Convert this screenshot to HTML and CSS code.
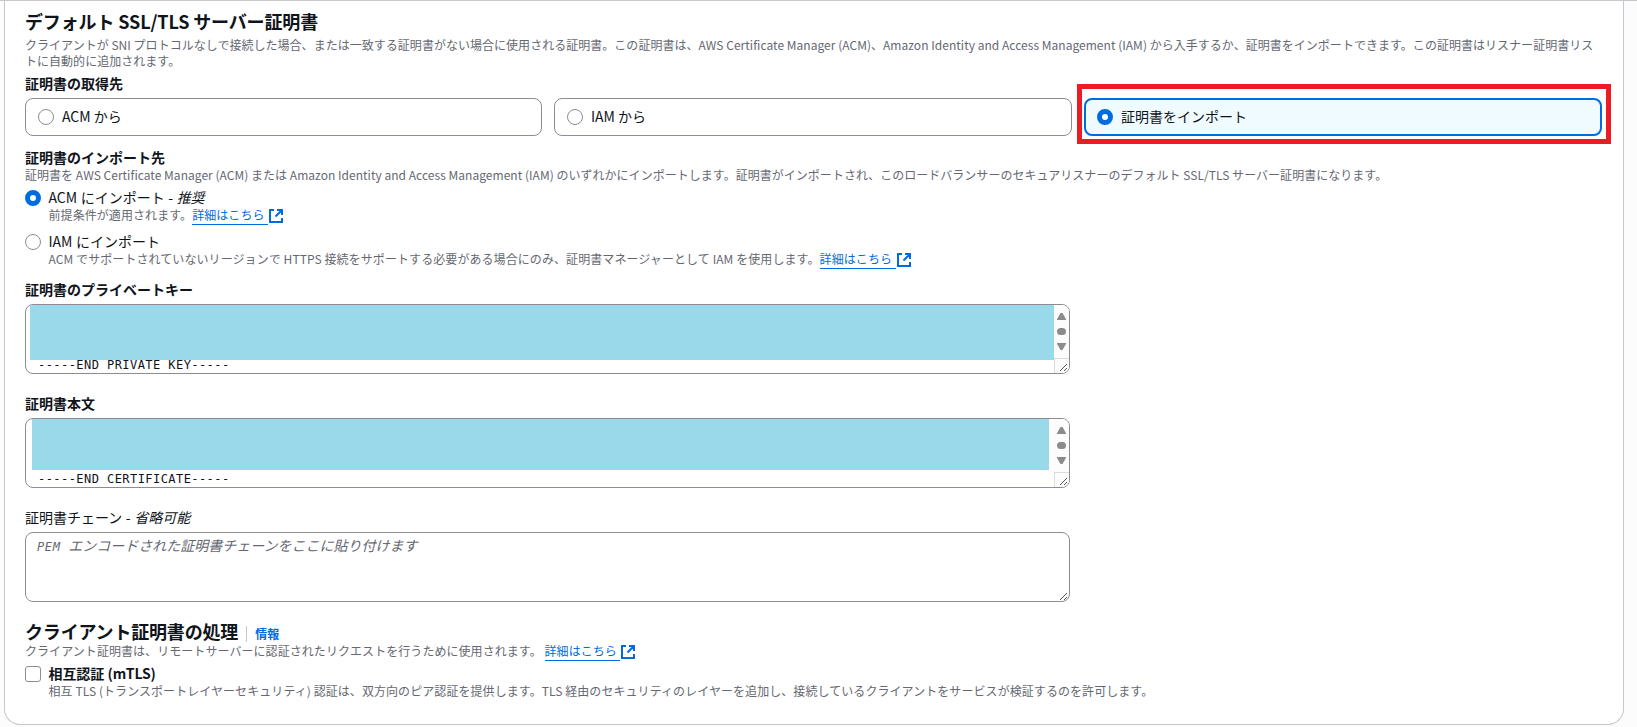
FILE: index.html
```
<!DOCTYPE html>
<html lang="ja">
<head>
  <meta charset="UTF-8">
  <title>デフォルト SSL/TLS サーバー証明書</title>
  <meta name="viewport" content="width=device-width, initial-scale=1">
  <link rel="stylesheet" href="styles.css">
</head>
<body>
  <svg class="symbols" width="0" height="0">
    <symbol id="external" viewBox="0 0 16 16">
      <path d="M6 2H2v12h12v-4M9 2h5v5M14 2L7.500 8.500" fill="none" stroke="currentColor" stroke-width="2"/>
    </symbol>
    <symbol id="grip" viewBox="0 0 9 9">
      <path d="M1 8L8 1M5 8L8 5" fill="none" stroke="#55565c" stroke-width="1"/>
    </symbol>
  </svg>
  <main class="panel">
    <h3 class="title">デフォルト SSL/TLS サーバー証明書</h3>
    <p class="desc desc-default">クライアントが SNI プロトコルなしで接続した場合、または一致する証明書がない場合に使用される証明書。この証明書は、AWS Certificate Manager (ACM)、Amazon Identity and Access Management (IAM) から入手するか、証明書をインポートできます。この証明書はリスナー証明書リス<br>トに自動的に追加されます。</p>

    <div class="label">証明書の取得先</div>
    <div class="tiles">
      <label class="tile"><span class="radio"></span>ACM から</label>
      <label class="tile"><span class="radio"></span>IAM から</label>
      <label class="tile selected"><span class="radio checked"></span>証明書をインポート</label>
    </div>

    <div class="label label-dest">証明書のインポート先</div>
    <p class="desc desc-dest">証明書を AWS Certificate Manager (ACM) または Amazon Identity and Access Management (IAM) のいずれかにインポートします。証明書がインポートされ、このロードバランサーのセキュアリスナーのデフォルト SSL/TLS サーバー証明書になります。</p>
    <div class="option">
      <span class="radio checked"></span>
      <div>
        <div class="option-name">ACM にインポート - <em>推奨</em></div>
        <p class="desc desc-acm">前提条件が適用されます。<a class="link">詳細はこちら</a><svg class="ext"><use href="#external"/></svg></p>
      </div>
    </div>
    <div class="option option-iam">
      <span class="radio"></span>
      <div>
        <div class="option-name">IAM にインポート</div>
        <p class="desc desc-iam">ACM でサポートされていないリージョンで HTTPS 接続をサポートする必要がある場合にのみ、証明書マネージャーとして IAM を使用します。<a class="link">詳細はこちら</a><svg class="ext"><use href="#external"/></svg></p>
      </div>
    </div>

    <div class="label label-key">証明書のプライベートキー</div>
    <div class="textarea">
      <div class="pem">-----END PRIVATE KEY-----</div>
      <div class="mask mask-key"></div>
      <div class="scrollbar">
        <svg width="15" height="53" viewBox="0 0 15 53" fill="#8b8b8b">
          <path d="M6.5 8h2L12 14.200V15H3v-.8z"/>
          <rect x="3" y="23" width="9" height="7" rx="3.5"/>
          <path d="M3 38h9v.8L8.500 45h-2L3 38.800z"/>
        </svg>
        <div class="corner"><svg class="grip"><use href="#grip"/></svg></div>
      </div>
    </div>

    <div class="label label-field">証明書本文</div>
    <div class="textarea">
      <div class="pem">-----END CERTIFICATE-----</div>
      <div class="mask mask-cert"></div>
      <div class="scrollbar">
        <svg width="15" height="53" viewBox="0 0 15 53" fill="#8b8b8b">
          <path d="M6.5 8h2L12 14.200V15H3v-.8z"/>
          <rect x="3" y="23" width="9" height="7" rx="3.5"/>
          <path d="M3 38h9v.8L8.500 45h-2L3 38.800z"/>
        </svg>
        <div class="corner"><svg class="grip"><use href="#grip"/></svg></div>
      </div>
    </div>

    <div class="label label-field normal">証明書チェーン - <em>省略可能</em></div>
    <div class="textarea empty">
      <div class="placeholder"><span>PEM </span>エンコードされた証明書チェーンをここに貼り付けます</div>
      <svg class="grip"><use href="#grip"/></svg>
    </div>

    <div class="heading">
      <h3>クライアント証明書の処理</h3>
      <a class="info">情報</a>
    </div>
    <p class="desc desc-client">クライアント証明書は、リモートサーバーに認証されたリクエストを行うために使用されます。 <a class="link">詳細はこちら</a><svg class="ext"><use href="#external"/></svg></p>
    <div class="option option-mtls">
      <span class="checkbox"></span>
      <div>
        <div class="option-name strong">相互認証 (mTLS)</div>
        <p class="desc desc-mtls">相互 TLS (トランスポートレイヤーセキュリティ) 認証は、双方向のピア認証を提供します。TLS 経由のセキュリティのレイヤーを追加し、接続しているクライアントをサービスが検証するのを許可します。</p>
      </div>
    </div>
  </main>
</body>
</html>
```
FILE: styles.css
```
* {
  box-sizing: border-box;
}
body {
  margin: 0;
  height: 727px;
  padding: 0 13px 0 4px;
  overflow: hidden;
  border-top: 1px solid #c6c6cd;
  background-color: #fcfcfd;
  color: #0f141a;
  font-family: "Noto Sans CJK JP", sans-serif;
  font-size: 14px;
  line-height: 20px;
}
.symbols {
  display: block;
}
.panel {
  height: 724px;
  padding: 10px 20px 0;
  background-color: #fff;
  border: 1px solid #c6c6cd;
  border-top: none;
  border-radius: 0 0 16px 16px;
}
h3 {
  margin: 0;
  padding-bottom: 2px;
  font-size: 18px;
  font-weight: 700;
  line-height: 20px;
  letter-spacing: -0.18px;
  white-space: nowrap;
}
.title {
  letter-spacing: -0.13px;
}
.desc {
  margin: 0;
  color: #656871;
  font-size: 12px;
  line-height: 16px;
  white-space: nowrap;
}
.desc-default {
  margin-top: 4px;
  letter-spacing: 0.028px;
}
.desc-dest {
  letter-spacing: 0.028px;
}
.desc-acm {
  letter-spacing: 0.07px;
}
.desc-iam {
  letter-spacing: 0.08px;
}
.desc-client {
  letter-spacing: 0.06px;
}
.desc-mtls {
  letter-spacing: 0.065px;
}
.label {
  height: 20px;
  margin: 4px 0 5px;
  font-weight: 700;
}
.label-dest {
  margin: 11px 0 0;
}
.label-key {
  margin-top: 12px;
}
.label-field {
  margin-top: 19px;
}
.normal {
  font-weight: 400;
}
.normal,
.option-name {
  word-spacing: 0.4px;
}
.tiles {
  display: grid;
  grid-template-columns: 517px 518px 518px;
  gap: 12px;
}
.tile {
  position: relative;
  display: flex;
  align-items: center;
  gap: 8px;
  height: 38px;
  padding: 0 0 2px 12px;
  border: 1px solid #8c8c94;
  border-radius: 8px;
}
.tile .radio {
  margin-top: 2px;
}
.tile.selected {
  padding-left: 11px;
  border: 2px solid #006ce0;
  background-color: #f0fbff;
}
/* highlight frame around the chosen tile */
.tile.selected::after {
  content: "";
  position: absolute;
  inset: -16px -11px -10px -9px;
  border: 5px solid #ed1c24;
}
.radio {
  flex: none;
  width: 16px;
  height: 16px;
  border: 1px solid #8c8c94;
  border-radius: 50%;
  background-color: #fff;
}
.radio.checked {
  border: 5px solid #006ce0;
}
.option {
  display: flex;
  gap: 7.5px;
  margin-top: 4px;
}
.option-iam {
  margin-top: 8px;
}
.option .radio,
.checkbox {
  margin-top: 3px;
}
.checkbox {
  flex: none;
  width: 16px;
  height: 16px;
  border: 1px solid #8c8c94;
  border-radius: 3px;
}
.option-name {
  height: 20px;
}
.option-name.strong {
  font-weight: 700;
  letter-spacing: -0.1px;
}
.link {
  display: inline-block;
  height: 18px;
  margin-bottom: -2px;
  padding-right: 3.5px;
  border-bottom: 1px solid #006ce0;
  color: #006ce0;
  vertical-align: top;
}
.ext {
  width: 16px;
  height: 16px;
  margin: 1px 0 -1px;
  color: #006ce0;
  vertical-align: top;
}
.textarea {
  position: relative;
  display: flex;
  justify-content: space-between;
  align-items: flex-end;
  width: 1045px;
  height: 70px;
  overflow: hidden;
  border: 1px solid #8c8c94;
  border-radius: 8px;
}
.pem {
  padding-left: 12px;
  font-family: "DejaVu Sans Mono", monospace;
  font-size: 12px;
  line-height: 15px;
  letter-spacing: 0.44px;
}
.mask {
  position: absolute;
  top: 0;
  background-color: #9ad9ea;
}
.mask-key {
  left: 4px;
  width: 1024px;
  height: 55px;
}
.mask-cert {
  left: 6px;
  width: 1017px;
  height: 51px;
}
.scrollbar {
  display: flex;
  flex-direction: column;
  width: 15px;
  height: 68px;
  background-color: #fcfcfc;
}
.corner {
  display: flex;
  justify-content: flex-end;
  align-items: flex-end;
  height: 15px;
  padding: 0 1px 1px 0;
  border: solid #dcdcdc;
  border-width: 1px 0 0 1px;
}
.grip {
  width: 9px;
  height: 9px;
}
.empty {
  padding-right: 1px;
}
.placeholder {
  align-self: flex-start;
  padding: 2px 11px;
  color: #656871;
  font-style: italic;
}
.placeholder span {
  font-family: "DejaVu Sans Mono", monospace;
  font-size: 12px;
  letter-spacing: 0.6px;
  white-space: pre;
}
.heading {
  display: flex;
  align-items: center;
  gap: 8px;
  height: 23px;
  margin-top: 18px;
}
.info {
  margin-top: 4px;
  padding-left: 8px;
  border-left: 1px solid #c6c6cd;
  color: #006ce0;
  font-size: 12px;
  font-weight: 700;
  line-height: 16px;
}
```
